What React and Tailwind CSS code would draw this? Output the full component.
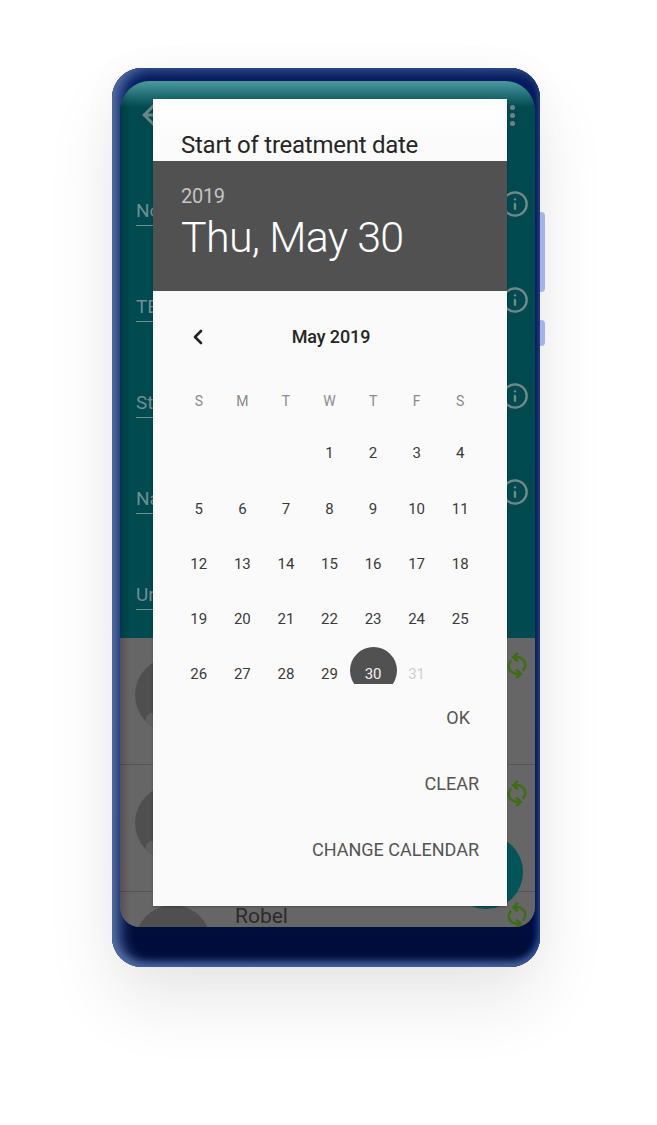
import { ArrowLeft, ChevronLeft, Info } from 'lucide-react';

const fields = ['No', 'TE', 'St', 'Na', 'Ur'];
const weekdays = ['S', 'M', 'T', 'W', 'T', 'F', 'S'];
const days = ['', '', '', 1, 2, 3, 4, 5, 6, 7, 8, 9, 10, 11, 12, 13, 14, 15, 16, 17, 18, 19, 20, 21, 22, 23, 24, 25, 26, 27, 28, 29, 30, 31];

function SyncIcon() {
  return (
    <svg width="20" height="29" viewBox="0 0 24 32" fill="none" stroke="#3c6e14" strokeWidth="3">
      <path d="M8 6 C16 5 22 9 22 15 C22 18 21 20 19 22" />
      <path d="M13 1 L7.500 6 L13 11" />
      <path d="M16 26 C8 27 2 23 2 17 C2 14 3 12 5 10" />
      <path d="M11 31 L16.500 26 L11 21" />
    </svg>
  );
}

function Avatar() {
  return (
    <div className="relative w-[76px] h-[76px] rounded-full bg-[#4f4f4f] overflow-hidden shrink-0">
      <div className="absolute left-[11px] top-[56px] w-[12px] h-[22px] rounded-full bg-[#606060]" />
    </div>
  );
}

function Row({ top }) {
  return (
    <div className={`flex items-start justify-between pl-[15px] pr-[6px] border-b border-[#555] ${top}`}>
      <Avatar />
    </div>
  );
}

export default function App() {
  return (
    <div className="w-[657px] h-[1125px] bg-white pt-[68px] pl-[112px] font-['Roboto',sans-serif] overflow-hidden">
      <div className="relative w-[428px] h-[899px] rounded-[30px] bg-gradient-to-b from-[#001a60] from-70% to-[#000c38] pt-[13px] pl-[8px] shadow-[0_35px_70px_rgba(0,0,0,0.09),0_0_40px_rgba(0,0,0,0.03),inset_8px_0_14px_#5570a8,inset_0_-5px_7px_#3a5490,inset_0_10px_8px_#0a2060,inset_-6px_0_5px_#001a5e]">
        {/* side buttons */}
        <div className="absolute left-[428px] top-[144px] w-[5px] h-[80px] rounded-r bg-[#a3b3e2]" />
        <div className="absolute left-[428px] top-[252px] w-[5px] h-[26px] rounded-r bg-[#a3b3e2]" />

        {/* screen */}
        <div className="relative w-[415px] h-[846px] rounded-t-[30px] rounded-b-[20px] overflow-hidden bg-[#004a50]">
          <div className="h-[557px] bg-[#004a50] relative">
            <ArrowLeft className="absolute left-[18px] top-[19px] text-[#6a8687]" size={30} strokeWidth={2.5} />
            <div className="absolute right-[20px] top-[24px] flex flex-col gap-[3px]">
              <div className="w-[5px] h-[5px] rounded-full bg-[#6f8283]" />
              <div className="w-[5px] h-[5px] rounded-full bg-[#6f8283]" />
              <div className="w-[5px] h-[5px] rounded-full bg-[#6f8283]" />
            </div>
            <div className="flex flex-col pt-[111px] pl-[16px] pr-[6px] gap-[34px]">
              {fields.map((f, i) => (
                <div key={f} className="flex items-start justify-between h-[62px]">
                  <div className="w-[150px] h-[34px] border-b border-[#6f8f90] text-[#6f8f90] text-[19px] leading-[38px]">{f}</div>
                  {i < 4 && <Info className="text-[#75898a] -mt-[2px]" size={28} strokeWidth={2} />}
                </div>
              ))}
            </div>
          </div>

          <div className="bg-[#666666] h-[289px] relative">
            <Row top="pt-[19px] h-[127px]" />
            <Row top="pt-[20px] h-[127px]" />
            <div className="pl-[15px] pt-[13px]">
              <Avatar />
            </div>
            <div className="absolute left-[115px] top-[269px] text-[21px] leading-[19px] text-[#2b2b2b]">Robel</div>
            <div className="absolute right-[8px] top-[13px]"><SyncIcon /></div>
            <div className="absolute right-[8px] top-[141px]"><SyncIcon /></div>
            <div className="absolute right-[8px] top-[263px]"><SyncIcon /></div>
            <div className="absolute left-[329px] top-[197px] w-[74px] h-[74px] rounded-full bg-[#025459]" />
          </div>

          {/* top glare and edge shading */}
          <div className="absolute inset-x-0 top-0 h-[26px] bg-gradient-to-b from-[#4a9a9f] to-transparent" />
          <div className="absolute left-0 top-0 bottom-0 w-[10px] bg-gradient-to-r from-[#00000030] to-transparent" />
        </div>

        {/* date picker dialog */}
        <div className="absolute left-[41px] top-[31px] w-[354px] h-[807px] bg-[#fafafa] shadow-[0_1px_2px_rgba(0,0,0,0.25)] flex flex-col">
          <div className="h-[62px] bg-gradient-to-b from-white to-[#fafafa] pl-[28px] pt-[27px] text-[24px] leading-[38px] tracking-[-0.26px] text-[#262626] overflow-hidden">
            Start of treatment date
          </div>
          <div className="h-[130px] bg-[#515151] pl-[28px] pt-[22px]">
            <div className="text-[20px] leading-[26px] tracking-[-0.3px] text-[#c4c4c4]">2019</div>
            <div className="text-[43px] leading-[52px] mt-[2px] font-[350] tracking-[-0.7px] text-white">Thu, May 30</div>
          </div>

          <div className="h-[393px] overflow-hidden pl-[24px] pr-[22px]">
            <div className="relative h-[92px] pt-[34px] text-center text-[18px] leading-[24px] font-medium tracking-[-0.1px] text-[#262626]">
              <ChevronLeft className="absolute left-[9px] top-[34px] text-[#222]" size={24} strokeWidth={2.6} />
              May 2019
            </div>
            <div className="grid grid-cols-7 mt-[1px] h-[34px] w-[305px] text-center text-[14px] leading-[34px] text-[#8a8a8a]">
              {weekdays.map((d, i) => (
                <div key={i}>{d}</div>
              ))}
            </div>
            <div className="grid grid-cols-7 auto-rows-[55.25px] w-[305px] mt-[8px] text-center text-[15px] text-[#3a3a3a]">
              {days.map((d, i) => (
                <div key={i} className="flex items-center justify-center">
                  {d === 30 ? (
                    <div className="w-[47px] h-[47px] -mt-[9px] rounded-full bg-[#515151] text-[#f2f2f2] flex items-center justify-center shrink-0">
                      <span className="mt-[9px]">30</span>
                    </div>
                  ) : (
                    <span className={d === 31 ? 'text-[#cfcfcf]' : ''}>{d}</span>
                  )}
                </div>
              ))}
            </div>
          </div>

          <div className="flex flex-col items-end pr-[28px] text-[18px] leading-[24px] text-[#555] pt-[22px] gap-[42px]">
            <div className="pr-[9px]">OK</div>
            <div>CLEAR</div>
            <div>CHANGE CALENDAR</div>
          </div>
        </div>
      </div>
    </div>
  );
}
